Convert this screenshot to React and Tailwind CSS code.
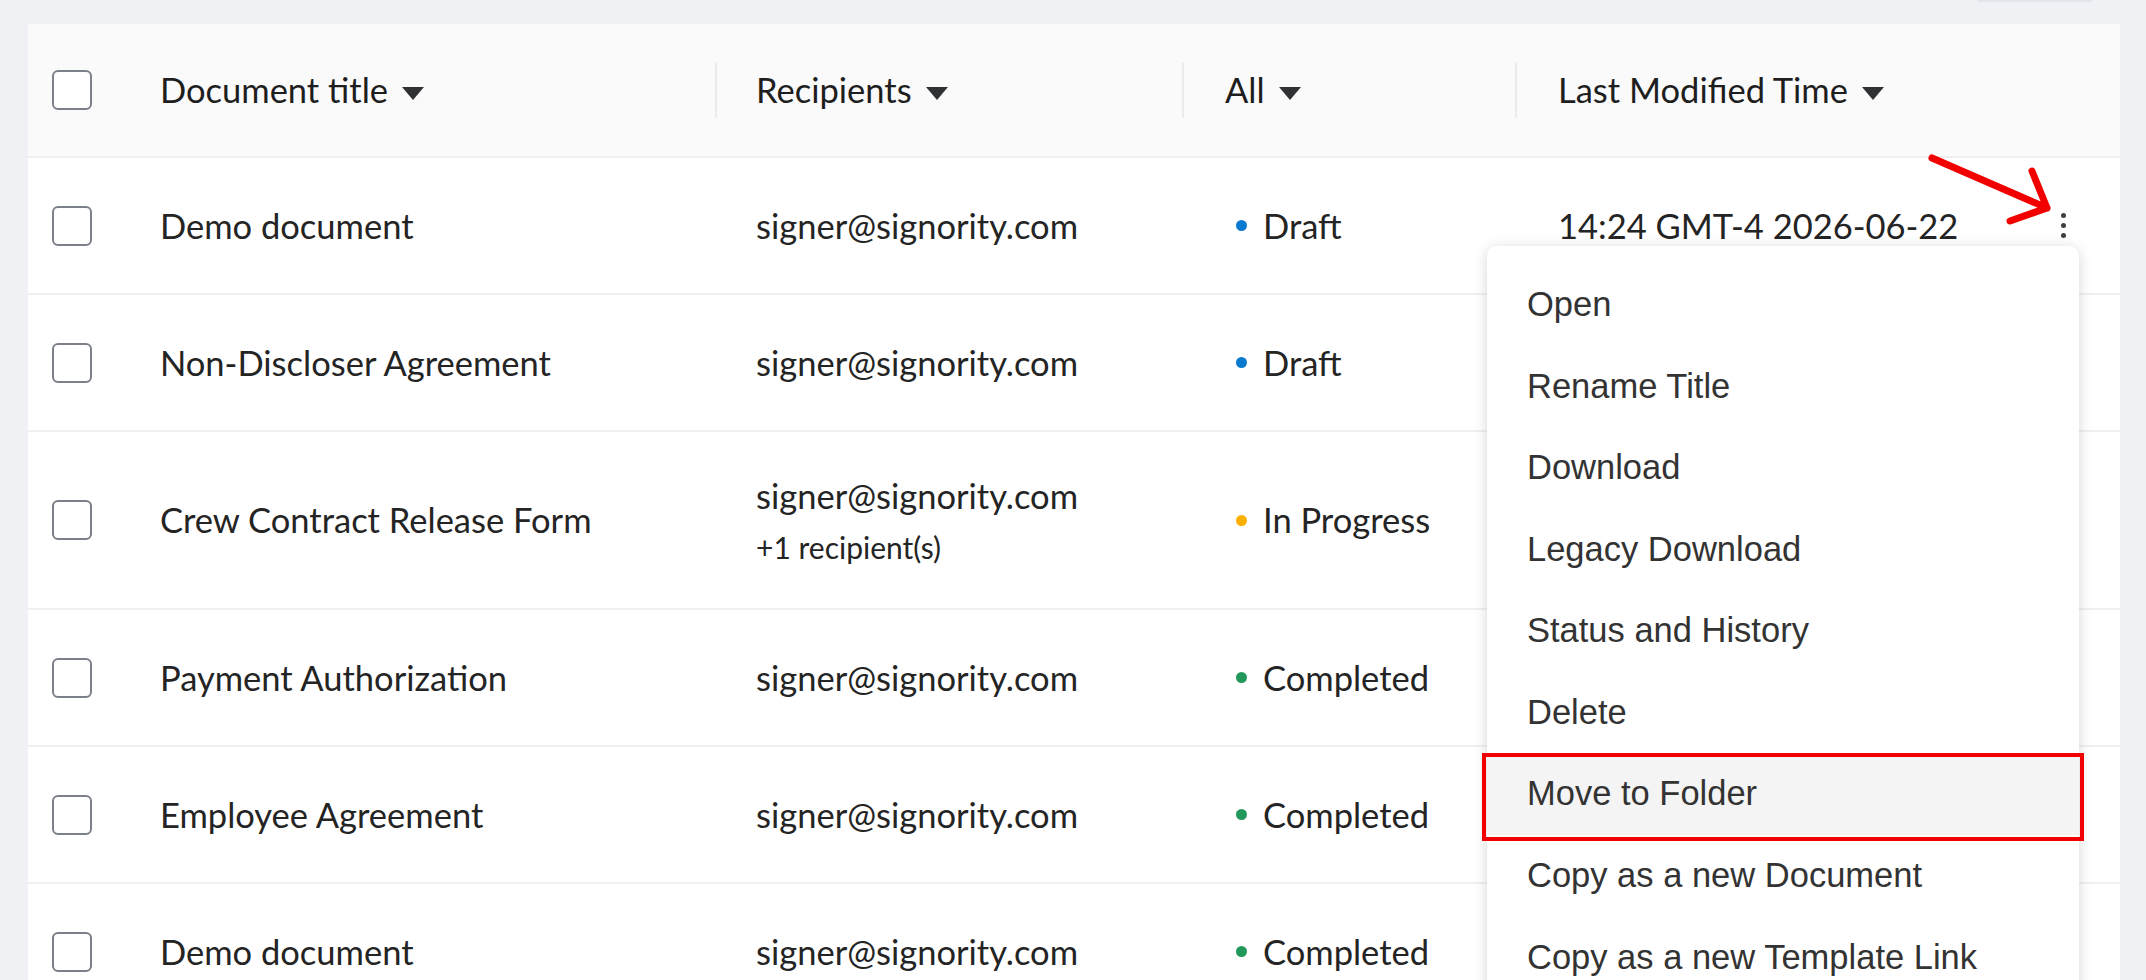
import React from "react";

// only the first row's timestamp is shown; the action menu sits over the rest
const documents = [
  { title: "Demo document", recipient: "signer@signority.com", status: "Draft", time: "14:24 GMT-4 2026-06-22" },
  { title: "Non-Discloser Agreement", recipient: "signer@signority.com", status: "Draft" },
  {
    title: "Crew Contract Release Form",
    recipient: "signer@signority.com",
    extra: "+1 recipient(s)",
    status: "In Progress",
  },
  { title: "Payment Authorization", recipient: "signer@signority.com", status: "Completed" },
  { title: "Employee Agreement", recipient: "signer@signority.com", status: "Completed" },
  { title: "Demo document", recipient: "signer@signority.com", status: "Completed" },
];

const dotColors = {
  Draft: "bg-[#0a7ad0]",
  "In Progress": "bg-[#fbb000]",
  Completed: "bg-[#22995a]",
};

const menuItems = [
  "Open",
  "Rename Title",
  "Download",
  "Legacy Download",
  "Status and History",
  "Delete",
  "Move to Folder",
  "Copy as a new Document",
  "Copy as a new Template Link",
];

const Checkbox = () => (
  <div className="w-[40px] h-[40px] rounded-[6px] border-[2.5px] border-[#7c808a] bg-white" />
);

const Caret = () => (
  <svg className="ml-[14px] mt-[6px]" width="22" height="13" viewBox="0 0 22 13">
    <path d="M0 0h22L11 13z" fill="#2f3135" />
  </svg>
);

const Divider = () => <div className="h-[55px] w-[2px] bg-[#ebebeb]" />;

const Kebab = () => (
  <div className="flex flex-col gap-[5px]">
    <span className="block w-[5px] h-[5px] rounded-full bg-[#3f3f3f]" />
    <span className="block w-[5px] h-[5px] rounded-full bg-[#3f3f3f]" />
    <span className="block w-[5px] h-[5px] rounded-full bg-[#3f3f3f]" />
  </div>
);

const App = () => {
  return (
    <div
      className="relative h-screen w-full overflow-hidden bg-[#f0f1f5]"
      style={{ fontFamily: "Lato, 'Noto Sans', sans-serif" }}
    >
      {/* toolbar button peeking above the table */}
      <div className="flex h-[24px] justify-end pr-[54px]">
        <div className="h-[2px] w-[114px] bg-[#e4e5ea]" />
      </div>

      {/* Documents table */}
      <div className="ml-[28px] mr-[26px] rounded-t-[4px] bg-white text-[34.5px] text-[#242424]">
        {/* Header */}
        <div className="flex h-[134px] items-center border-b-2 border-[#efefef] bg-[#fafafa] rounded-t-[4px] text-[#1e1e1e]">
          <div className="w-[91px] pl-[24px]">
            <Checkbox />
          </div>
          <div className="flex w-[596px] items-center pl-[41px]">
            <span>Document title</span>
            <Caret />
          </div>
          <div className="flex w-[467px] items-center">
            <Divider />
            <span className="ml-[39px]">Recipients</span>
            <Caret />
          </div>
          <div className="flex w-[333px] items-center">
            <Divider />
            <span className="ml-[41px]">All</span>
            <Caret />
          </div>
          <div className="flex flex-1 items-center">
            <Divider />
            <span className="ml-[41px]">Last Modified Time</span>
            <Caret />
          </div>
        </div>

        {/* Rows */}
        {documents.map((doc, i) => (
          <div
            key={i}
            className={`flex items-center border-b-2 border-[#f0f0f0] ${doc.extra ? "h-[178px]" : "h-[137px]"}`}
          >
            <div className="w-[91px] pl-[24px]">
              <Checkbox />
            </div>
            <div className="w-[596px] pl-[41px]">{doc.title}</div>
            <div className="w-[467px] pl-[41px]">
              <div className="leading-[42px]">{doc.recipient}</div>
              {doc.extra && <div className="mt-[12px] text-[30px] leading-[36px]">{doc.extra}</div>}
            </div>
            <div className="flex w-[333px] items-center pl-[54px]">
              <span className={`block h-[11px] w-[11px] rounded-full ${dotColors[doc.status]}`} />
              <span className="ml-[16px]">{doc.status}</span>
            </div>
            <div className="flex flex-1 items-center justify-between pl-[43px] pr-[54px]">
              <span>{doc.time}</span>
              {i === 0 && <Kebab />}
            </div>
          </div>
        ))}
      </div>

      {/* Row actions menu */}
      <div
        className="absolute left-[1487px] top-[246px] w-[592px] rounded-[10px] bg-white pt-[18px] pb-[18px] text-[34.5px] text-[#333333] shadow-[0_2px_14px_rgba(0,0,0,0.16)]"
        style={{ fontFamily: "'Liberation Sans', Arial, sans-serif" }}
      >
        {menuItems.map((item) => (
          <div
            key={item}
            className={`relative flex h-[81.6px] items-center pl-[40px] ${item === "Move to Folder" ? "bg-[#f4f4f4]" : ""}`}
          >
            {item}
            {item === "Move to Folder" && (
              <div className="absolute -left-[5px] -right-[5px] -top-[1px] -bottom-[6px] border-[4px] border-[#f00000]" />
            )}
          </div>
        ))}
      </div>

      {/* Pointer arrow toward the row's action button */}
      <svg className="absolute left-0 top-0" width="2146" height="980" viewBox="0 0 2146 980" fill="none">
        <path
          d="M1932 158L2047 208M2032 171L2047 208L2010 221"
          stroke="#f20000"
          strokeWidth="7"
          strokeLinecap="round"
          strokeLinejoin="round"
        />
      </svg>
    </div>
  );
};

export default App;
